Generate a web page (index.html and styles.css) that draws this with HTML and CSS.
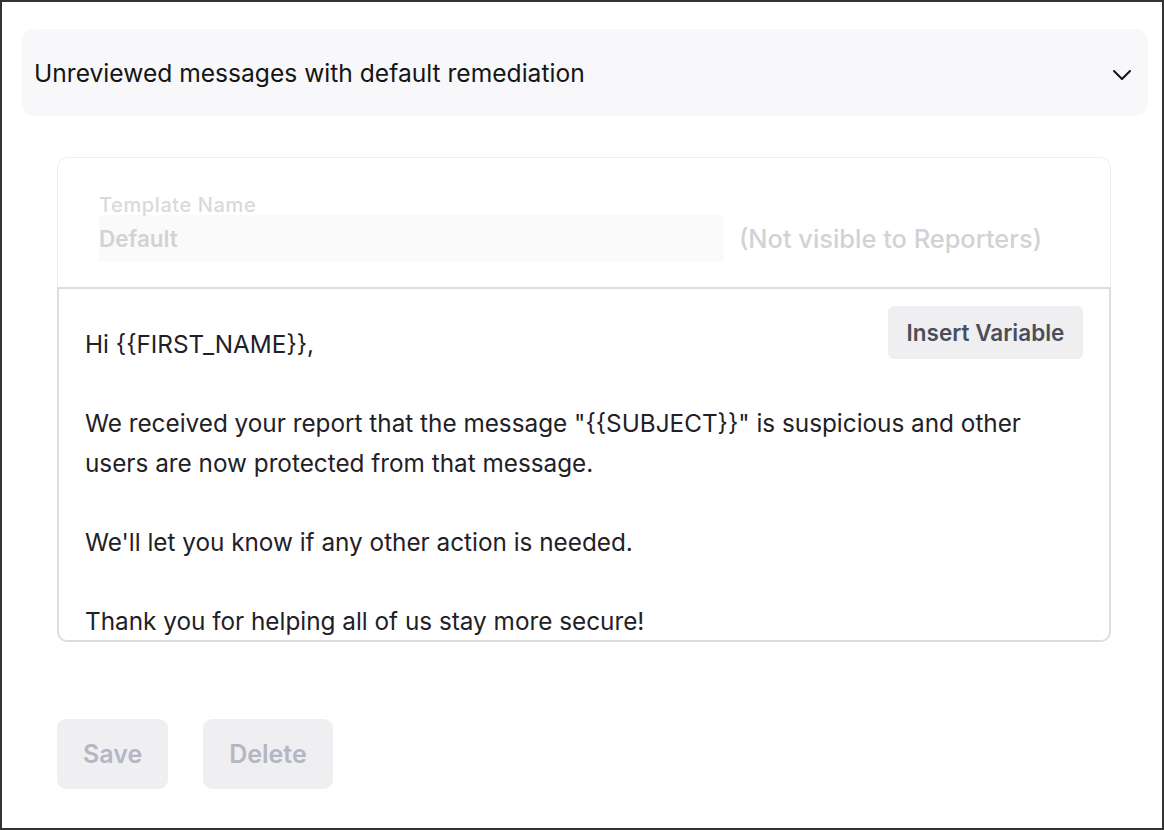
FILE: index.html
```html
<!DOCTYPE html>
<html lang="en">
<head>
<meta charset="utf-8">
<title>Remediation template</title>
<link rel="stylesheet" href="styles.css">
</head>
<body>
<div class="frame">
  <div class="accordion">
    <span class="accordion-title">Unreviewed messages with default remediation</span>
    <svg class="chevron" width="20" height="12" viewBox="0 0 20 12"><path d="M2 2 L10 10 L18 2" fill="none" stroke="#111" stroke-width="2" stroke-linecap="round" stroke-linejoin="round"/></svg>
  </div>
  <div class="panel">
    <div class="card">
      <div class="card-top">
        <div class="field">
          <div class="field-label">Template Name</div>
          <div class="field-input">Default</div>
        </div>
        <div class="field-note">(Not visible to Reporters)</div>
      </div>
      <div class="editor">
        <button class="insert-btn">Insert Variable</button>
        <p class="line">Hi {{FIRST_NAME}},</p>
        <p class="line">&nbsp;</p>
        <p class="line">We received your report that the message "{{SUBJECT}}" is suspicious and other users are now protected from that message.</p>
        <p class="line">&nbsp;</p>
        <p class="line">We'll let you know if any other action is needed.</p>
        <p class="line">&nbsp;</p>
        <p class="line">Thank you for helping all of us stay more secure!</p>
      </div>
    </div>
    <div class="actions">
      <button class="btn">Save</button>
      <button class="btn">Delete</button>
    </div>
  </div>
</div>
</body>
</html>
```
FILE: styles.css
```css
html, body {
  margin: 0;
  padding: 0;
}
body {
  font-family: "Inter", "Lato", sans-serif;
  color: #1f2126;
}
.frame {
  box-sizing: border-box;
  width: 1164px;
  height: 830px;
  border: 2px solid #333333;
  background: #ffffff;
  padding: 27px 14px 0 20px;
  overflow: hidden;
}
.accordion {
  height: 87px;
  box-sizing: border-box;
  background: #f8f8fa;
  border-radius: 12px;
  display: flex;
  align-items: center;
  justify-content: space-between;
  padding: 0 16px 0 12px;
}
.accordion-title {
  font-size: 24.6px;
  color: #151515;
}
.chevron {
  display: block;
  margin-top: 4px;
}
.panel {
  padding: 41px 36px 0 35px;
}
.card {
  width: 1054px;
  box-sizing: border-box;
}
.card-top {
  height: 130px;
  box-sizing: border-box;
  border: 1px solid #efeff2;
  border-bottom: none;
  border-radius: 10px 10px 0 0;
  display: flex;
  align-items: flex-end;
  padding: 0 0 25px 41px;
  gap: 15px;
}
.field-label {
  font-size: 20px;
  font-weight: 500;
  color: #d9d9dd;
  line-height: 24px;
  margin-bottom: -2px;
  letter-spacing: 0.6px;
}
.field-input {
  width: 625px;
  height: 47px;
  box-sizing: border-box;
  background: #fafafa;
  font-size: 22.5px;
  font-weight: 600;
  color: #d2d2d6;
  display: flex;
  align-items: center;
  padding-bottom: 1px;
}
.field-note {
  font-size: 25.4px;
  color: #d2d2d6;
  font-weight: 500;
  line-height: 47px;
  padding-top: 2px;
}
.editor {
  position: relative;
  height: 355px;
  box-sizing: border-box;
  border: 2px solid #dcdce2;
  border-radius: 0 0 10px 10px;
  padding: 36px 60px 0 26px;
  overflow: hidden;
}
.line {
  margin: 0;
  font-size: 24.3px;
  line-height: 39.5px;
  color: #1f2126;
}
.insert-btn {
  position: absolute;
  top: 17px;
  right: 26px;
  width: 195px;
  height: 53px;
  border: none;
  border-radius: 6px;
  background: #efeff1;
  font-family: inherit;
  font-size: 22.5px;
  font-weight: 600;
  color: #4b4e58;
  cursor: pointer;
}
.actions {
  display: flex;
  gap: 35px;
  margin-top: 77px;
}
.btn {
  height: 70px;
  padding: 0 26px;
  border: none;
  border-radius: 9px;
  background: #efeff1;
  font-family: inherit;
  font-size: 25px;
  font-weight: 600;
  color: #b5b6c4;
}
```
